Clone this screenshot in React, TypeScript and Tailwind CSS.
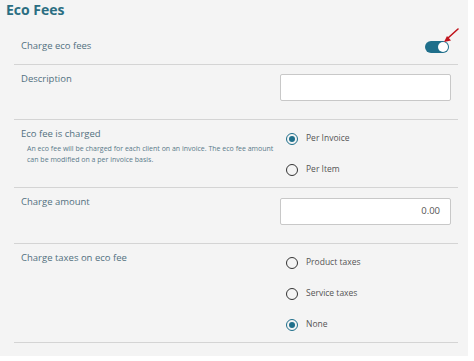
import { type FC } from 'react'

const font = { fontFamily: '"Open Sans", "Noto Sans", sans-serif' }

const Radio: FC<{ label: string; checked?: boolean }> = ({ label, checked }) => (
  <div className="flex items-center gap-[8px] h-[31px]">
    <span
      className={`w-[12px] h-[12px] rounded-full border-[1.5px] flex items-center justify-center ${
        checked ? 'border-[#1f6f8b]' : 'border-[#333]'
      }`}
    >
      {checked && <span className="w-[6px] h-[6px] rounded-full bg-[#1f6f8b]" />}
    </span>
    <span className="text-[8.5px] text-[#555]">{label}</span>
  </div>
)

const Toggle: FC = () => (
  <div className="relative w-[24px] h-[12px]">
    <div className="w-[24px] h-[12px] rounded-full bg-[#1f6f8b] flex items-center justify-end pr-[1px]">
      <div className="w-[10px] h-[10px] rounded-full bg-white" />
    </div>
    <svg className="absolute left-[17px] top-[-13px]" width="18" height="16" viewBox="0 0 18 16">
      <line x1="16" y1="1" x2="6" y2="10" stroke="#c0141c" strokeWidth="1.6" strokeLinecap="round" />
      <polygon points="2,14 9,12.5 5,8" fill="#c0141c" />
    </svg>
  </div>
)

const Input: FC<{ value?: string }> = ({ value }) => (
  <div className="w-[171px] h-[27px] bg-white border border-[#c8c8c8] rounded-[2px] flex items-center justify-end pr-[10px] text-[9.5px] text-[#555]">
    {value}
  </div>
)

export default function App() {
  return (
    <div className="w-[474px] h-[361px] bg-white" style={font}>
      <div className="w-[468px] h-[356px] bg-[#f4f4f4]">
        <h1 className="pl-[6px] pt-[1px] text-[14px] font-bold text-[#2b6e82] leading-[18px]">Eco Fees</h1>
        <div className="mx-[14px] w-[444px] mt-[10px]">
          <div className="h-[36px] flex items-center justify-between border-b border-[#d4d4d4] pl-[7px] pr-[9px]">
            <span className="text-[9.5px] text-[#52707f]">Charge eco fees</span>
            <Toggle />
          </div>
          <div className="h-[55px] grid grid-cols-[266px_1fr] border-b border-[#d4d4d4]">
            <div className="pl-[7px] pt-[7px] text-[9.5px] text-[#52707f]">Description</div>
            <div className="pt-[9px]">
              <Input />
            </div>
          </div>
          <div className="h-[68px] grid grid-cols-[266px_1fr] border-b border-[#d4d4d4]">
            <div className="pl-[7px] pt-[7px]">
              <div className="text-[9.5px] text-[#52707f] leading-[14px]">Eco fee is charged</div>
              <p className="pl-[6px] pt-[2px] text-[7px] leading-[11px] text-[#5a7a8a] w-[264px]">
                An eco fee will be charged for each client on an invoice. The eco fee amount can be modified on a per invoice basis.
              </p>
            </div>
            <div className="pl-[6px] pt-[3px]">
              <Radio label="Per Invoice" checked />
              <Radio label="Per Item" />
            </div>
          </div>
          <div className="h-[56px] grid grid-cols-[266px_1fr] border-b border-[#d4d4d4]">
            <div className="pl-[7px] pt-[7px] text-[9.5px] text-[#52707f]">Charge amount</div>
            <div className="pt-[10px]">
              <Input value="0.00" />
            </div>
          </div>
          <div className="h-[99px] grid grid-cols-[266px_1fr] border-b border-[#d4d4d4]">
            <div className="pl-[7px] pt-[7px] text-[9.5px] text-[#52707f]">Charge taxes on eco fee</div>
            <div className="pl-[6px] pt-[3px]">
              <Radio label="Product taxes" />
              <Radio label="Service taxes" />
              <Radio label="None" checked />
            </div>
          </div>
        </div>
      </div>
    </div>
  )
}
